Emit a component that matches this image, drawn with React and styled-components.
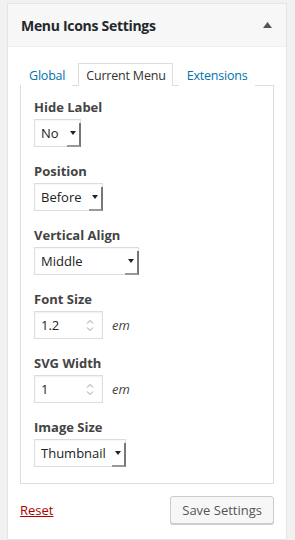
import { createGlobalStyle } from 'styled-components';
import styled from 'styled-components';

const GlobalStyle = createGlobalStyle`
  html, body {
    margin: 0;
    padding: 0;
    background: #f1f1f1;
    font-family: "Open Sans", "Noto Sans", sans-serif;
  }
  * { box-sizing: border-box; }
`;

const tabs = ['Global', 'Current Menu', 'Extensions'];

const fields = [
  { label: 'Hide Label', type: 'select', value: 'No', width: 47 },
  { label: 'Position', type: 'select', value: 'Before', width: 69 },
  { label: 'Vertical Align', type: 'select', value: 'Middle', width: 105 },
  { label: 'Font Size', type: 'number', value: '1.2', unit: 'em' },
  { label: 'SVG Width', type: 'number', value: '1', unit: 'em' },
  { label: 'Image Size', type: 'select', value: 'Thumbnail', width: 92 }
];

function Caret() {
  return (
    <svg width="6" height="4" viewBox="0 0 6 4">
      <path d="M0 0h6L3 4z" fill="#222" />
    </svg>
  );
}

function Spinner() {
  return (
    <SpinBox>
      <svg width="8" height="5" viewBox="0 0 8 5">
        <path d="M1 4.5L4 1.5l3 3" fill="none" stroke="#999" strokeWidth="1" />
      </svg>
      <svg width="8" height="5" viewBox="0 0 8 5">
        <path d="M1 0.5L4 3.5l3-3" fill="none" stroke="#999" strokeWidth="1" />
      </svg>
    </SpinBox>
  );
}

export default function App() {
  return (
    <>
      <GlobalStyle />
      <Page>
        <Panel>
          <Header>
            <Title>Menu Icons Settings</Title>
            <Toggle>
              <svg width="9" height="6" viewBox="0 0 9 6">
                <path d="M4.5 0L9 6H0z" fill="#555" />
              </svg>
            </Toggle>
          </Header>
          <Body>
            <TabRow>
              {tabs.map((tab) => (
                <Tab key={tab} $active={tab === 'Current Menu'}>
                  {tab}
                </Tab>
              ))}
            </TabRow>
            <TabPanel>
              {fields.map((field) => (
                <Field key={field.label}>
                  <Label>{field.label}</Label>
                  {field.type === 'select' ? (
                    <SelectBox style={{ width: field.width }}>
                      <span>{field.value}</span>
                      <Caret />
                    </SelectBox>
                  ) : (
                    <NumberRow>
                      <NumberBox>
                        <span>{field.value}</span>
                        <Spinner />
                      </NumberBox>
                      <Unit>{field.unit}</Unit>
                    </NumberRow>
                  )}
                </Field>
              ))}
            </TabPanel>
            <Footer>
              <ResetLink href="#">Reset</ResetLink>
              <SaveButton type="button">Save Settings</SaveButton>
            </Footer>
          </Body>
        </Panel>
      </Page>
    </>
  );
}

const Page = styled.div`
  padding: 3px 8px 0 7px;
  min-height: 540px;
`;

const Panel = styled.section`
  background: #fff;
  border: 1px solid #e5e5e5;
  min-height: 537px;
`;

const Header = styled.div`
  display: flex;
  align-items: center;
  justify-content: space-between;
  height: 43px;
  padding: 0 13px 0 13px;
  background: #f7f7f7;
  border-bottom: 1px solid #eee;
`;

const Title = styled.h2`
  margin: 0;
  font-size: 14px;
  font-weight: 700;
  letter-spacing: -0.3px;
  color: #23282d;
`;

const Toggle = styled.span`
  display: flex;
  align-items: center;
  padding-right: 1px;
`;

const Body = styled.div`
  padding: 16px 12px 0 12px;
`;

const TabRow = styled.div`
  display: flex;
  align-items: flex-end;
  padding-left: 1px;
  gap: 6px;
`;

const Tab = styled.div`
  height: 23px;
  padding: 0 6px 0 7px;
  display: flex;
  align-items: center;
  font-size: 12.5px;
  letter-spacing: -0.2px;
  color: ${({ $active }) => ($active ? '#333' : '#0073aa')};
  background: #fff;
  border: 1px solid ${({ $active }) => ($active ? '#ddd' : 'transparent')};
  border-bottom: none;
  margin-bottom: -1px;
  position: relative;
  z-index: 1;
`;

const TabPanel = styled.div`
  border: 1px solid #ddd;
  padding: 11px 13px 16px 13px;
  display: flex;
  flex-direction: column;
  gap: 14px;
`;

const Field = styled.div`
  display: flex;
  flex-direction: column;
  align-items: flex-start;
  gap: 2px;
`;

const Label = styled.div`
  font-size: 13px;
  font-weight: 700;
  line-height: 20px;
  color: #444;
`;

const SelectBox = styled.div`
  position: relative;
  height: 28px;
  display: flex;
  align-items: center;
  justify-content: space-between;
  padding: 0 4px 0 6px;
  font-size: 13px;
  color: #222;
  border: 1px solid #ddd;
  box-shadow: inset 0 1px 2px rgba(0, 0, 0, 0.04);

  &::after {
    content: '';
    position: absolute;
    right: -1px;
    bottom: -1px;
    width: 12px;
    height: 22px;
    border-right: 2px solid #777;
    border-bottom: 2px solid #999;
  }
`;

const NumberRow = styled.div`
  display: flex;
  align-items: center;
  gap: 9px;
`;

const NumberBox = styled.div`
  width: 69px;
  height: 28px;
  display: flex;
  align-items: center;
  justify-content: space-between;
  padding: 0 8px 0 6px;
  font-size: 13px;
  color: #222;
  border: 1px solid #ddd;
  box-shadow: inset 0 1px 2px rgba(0, 0, 0, 0.07);
`;

const SpinBox = styled.span`
  display: flex;
  flex-direction: column;
  gap: 3px;
`;

const Unit = styled.span`
  font-size: 13px;
  font-style: italic;
  color: #444;
`;

const Footer = styled.div`
  display: flex;
  align-items: center;
  justify-content: space-between;
  padding-top: 12px;
`;

const ResetLink = styled.a`
  font-size: 13px;
  color: #a00;
  text-decoration: underline;
`;

const SaveButton = styled.button`
  height: 28px;
  padding: 0 11px;
  font-family: inherit;
  font-size: 13px;
  color: #555;
  background: #f7f7f7;
  border: 1px solid #ccc;
  border-radius: 3px;
  box-shadow: 0 1px 0 #ccc;
  cursor: pointer;
`;
